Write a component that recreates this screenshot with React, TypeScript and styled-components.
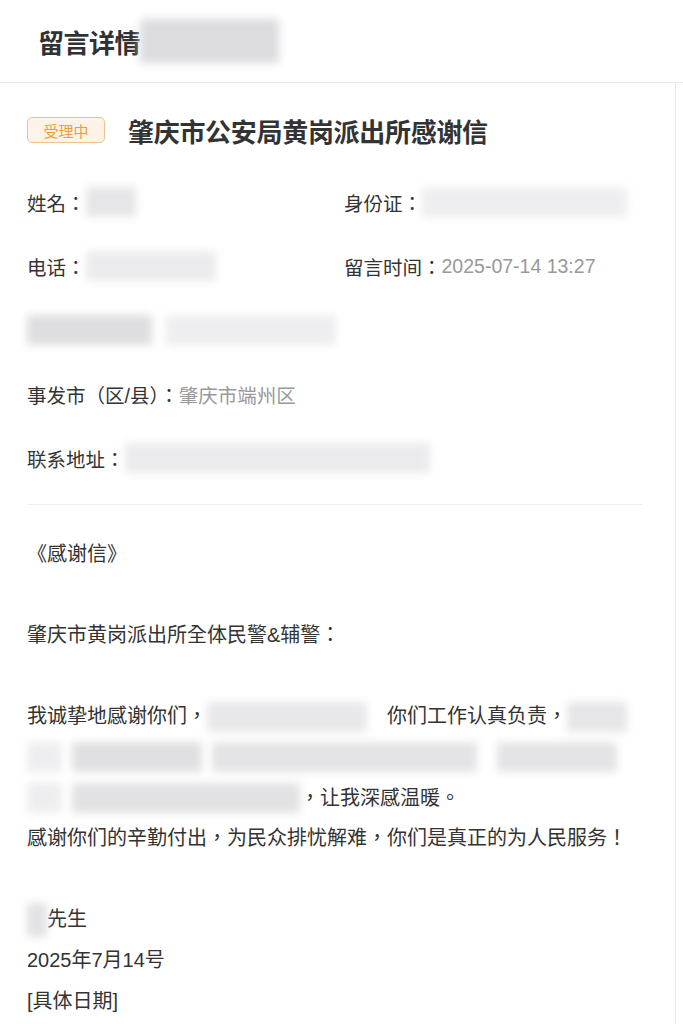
import styled, { createGlobalStyle } from "styled-components";

const GlobalStyle = createGlobalStyle`
	html, body {
		margin: 0;
		padding: 0;
		background: #fff;
	}
	body {
		font-family: "Liberation Sans", "Noto Sans CJK TC", sans-serif;
		color: #333;
	}
`;

const Page = styled.div`
	width: 683px;
	min-height: 1024px;
	background: #fff;
`;

const Header = styled.header`
	height: 82px;
	display: flex;
	align-items: center;
	padding-left: 38px;
	border-bottom: 1px solid #ececec;
	box-shadow: 0 1px 2px rgba(0, 0, 0, 0.03);
`;

const HeaderTitle = styled.h1`
	margin: 0;
	font-size: 26px;
	font-weight: 700;
	color: #303133;
	font-family: "Noto Sans CJK SC", sans-serif;
	letter-spacing: -0.5px;
`;

const Blur = styled.span<{ $w: number; $h?: number; $tone?: string }>`
	display: inline-block;
	width: ${(p) => p.$w}px;
	height: ${(p) => p.$h ?? 30}px;
	background: ${(p) => p.$tone ?? "#e6e6e8"};
	filter: blur(4px);
	vertical-align: middle;
	flex-shrink: 0;
`;

const Card = styled.main`
	width: 676px;
	box-sizing: border-box;
	border-right: 1px solid #e8e8e8;
	padding: 34px 0 20px 27px;
`;

const TitleRow = styled.div`
	display: flex;
	align-items: center;
	gap: 23px;
	height: 26px;
	margin-bottom: 27px;
`;

const Badge = styled.span`
	display: inline-flex;
	align-items: center;
	justify-content: center;
	width: 78px;
	height: 26px;
	box-sizing: border-box;
	border: 1px solid #f1c28f;
	border-radius: 5px;
	background: #fdf3e8;
	color: #f19a3e;
	font-size: 15px;
	font-family: "Noto Sans CJK SC", sans-serif;
`;

const Title = styled.h2`
	margin: 0;
	font-size: 26px;
	font-weight: 700;
	color: #333;
	font-family: "Noto Sans CJK SC", sans-serif;
	letter-spacing: -0.3px;
`;

const InfoGrid = styled.div`
	display: grid;
	grid-template-columns: 317px 1fr;
	grid-auto-rows: 64px;
	align-items: center;
	width: 615px;
`;

const Field = styled.div<{ $full?: boolean }>`
	display: flex;
	align-items: center;
	font-size: 19.5px;
	color: #333;
	grid-column: ${(p) => (p.$full ? "1 / -1" : "auto")};
`;

const Value = styled.span`
	color: #999;
`;

const Divider = styled.hr`
	margin: 14px 0 0 1px;
	width: 614px;
	border: none;
	border-top: 1px solid #ececec;
`;

const Letter = styled.section`
	padding-top: 29px;
	font-size: 20px;
	line-height: 40.6px;
	color: #333;
`;

const Line = styled.div<{ $gap?: boolean }>`
	display: flex;
	align-items: center;
	height: 40.6px;
	white-space: nowrap;
	margin-bottom: ${(p) => (p.$gap ? "40.6px" : "0")};
`;

const Spacer = styled.span<{ $w: number }>`
	display: inline-block;
	width: ${(p) => p.$w}px;
`;

export default function App() {
	return (
		<Page>
			<GlobalStyle />
			<Header>
				<HeaderTitle>留言详情</HeaderTitle>
				<Blur $w={139} $h={44} $tone="#dcdcdf" />
			</Header>
			<Card>
				<TitleRow>
					<Badge>受理中</Badge>
					<Title>肇庆市公安局黄岗派出所感谢信</Title>
				</TitleRow>
				<InfoGrid>
					<Field>
						姓名：<Blur $w={50} />
					</Field>
					<Field>
						身份证：<Blur $w={205} $tone="#eeeef0" />
					</Field>
					<Field>
						电话：<Blur $w={130} $tone="#ebebed" />
					</Field>
					<Field>
						留言时间：<Value>2025-07-14 13:27</Value>
					</Field>
					<Field $full>
						<Blur $w={125} $tone="#dedee0" />
						<Spacer $w={14} />
						<Blur $w={170} $tone="#eeeef0" />
					</Field>
					<Field $full>
						事发市（区/县）：<Value>肇庆市端州区</Value>
					</Field>
					<Field $full>
						联系地址：<Blur $w={305} $tone="#ebebed" />
					</Field>
				</InfoGrid>
				<Divider />
				<Letter>
					<Line $gap>《感谢信》</Line>
					<Line $gap>肇庆市黄岗派出所全体民警&amp;辅警：</Line>
					<Line>
						我诚挚地感谢你们，
						<Blur $w={160} $tone="#e8e8ea" />
						<Spacer $w={20} />
						你们工作认真负责，
						<Blur $w={60} $tone="#e6e6e8" />
					</Line>
					<Line>
						<Blur $w={35} $tone="#eeeef0" />
						<Spacer $w={10} />
						<Blur $w={130} $tone="#e0e0e2" />
						<Spacer $w={10} />
						<Blur $w={265} $tone="#e4e4e6" />
						<Spacer $w={20} />
						<Blur $w={120} $tone="#e4e4e6" />
					</Line>
					<Line>
						<Blur $w={35} $tone="#eeeef0" />
						<Spacer $w={10} />
						<Blur $w={228} $tone="#e2e2e4" />
						，让我深感温暖。
					</Line>
					<Line $gap>感谢你们的辛勤付出，为民众排忧解难，你们是真正的为人民服务！</Line>
					<Line>
						<Blur $w={20} $h={34} $tone="#e2e2e4" />
						先生
					</Line>
					<Line>2025年7月14号</Line>
					<Line>[具体日期]</Line>
				</Letter>
			</Card>
		</Page>
	);
}
